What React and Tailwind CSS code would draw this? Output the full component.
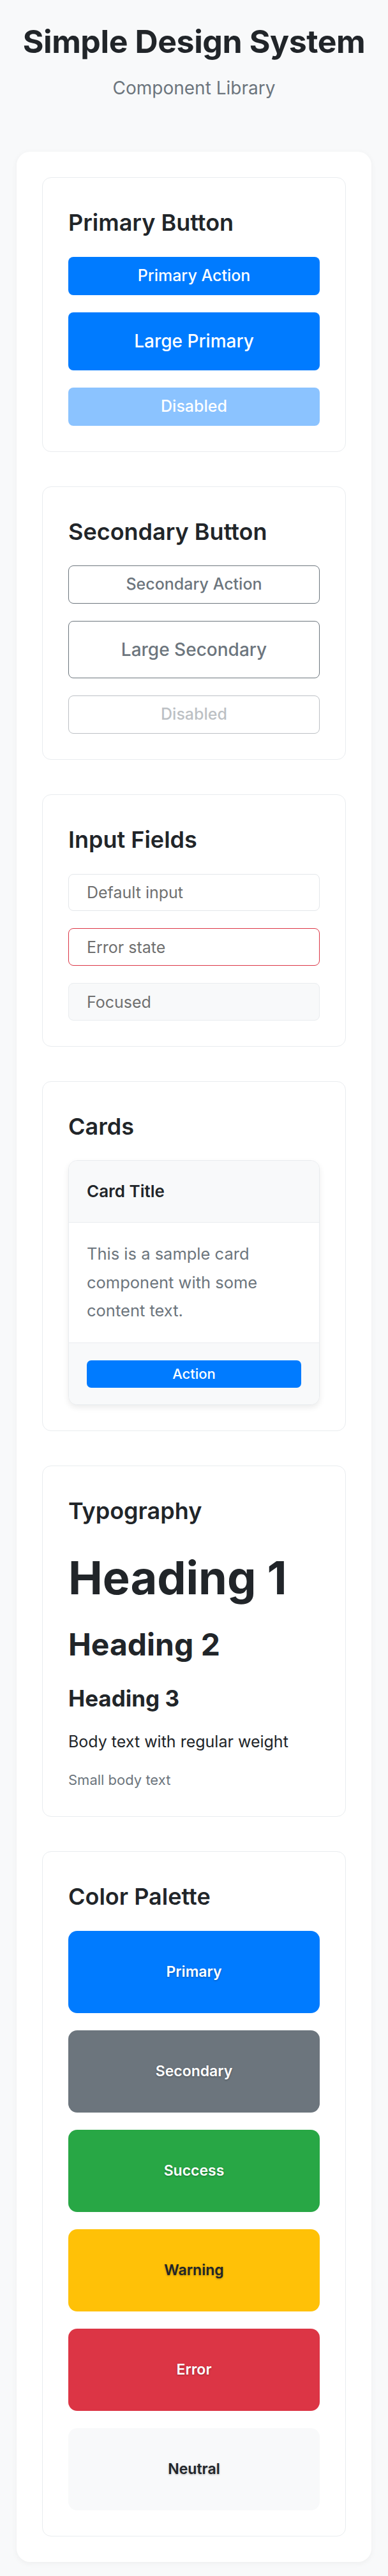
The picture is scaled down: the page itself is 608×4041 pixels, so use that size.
import React from "react";

const swatches = [
  { name: "Primary", cls: "bg-[#007bff] text-white" },
  { name: "Secondary", cls: "bg-[#6c757d] text-white" },
  { name: "Success", cls: "bg-[#28a745] text-white" },
  { name: "Warning", cls: "bg-[#ffc107] text-[#212529]" },
  { name: "Error", cls: "bg-[#dc3545] text-white" },
  { name: "Neutral", cls: "bg-[#f8f9fa] text-[#212529]" },
];

function Section({ title, children }) {
  return (
    <section className="rounded-[14px] border border-[#e9ecef] bg-white p-[40px]">
      <h2 className="mb-[23.5px] text-[36px] font-semibold leading-[60px] text-[#212529]">
        {title}
      </h2>
      {children}
    </section>
  );
}

export default function App() {
  return (
    <div className="min-h-screen bg-[#f8f9fa] px-[26px] pt-[36px] pb-[26px] font-[Inter,sans-serif] text-[#212529]">
      <header className="text-center">
        <h1 className="whitespace-nowrap text-[50px] font-bold leading-[58px] tracking-[-0.4px]">
          Simple Design System
        </h1>
        <p className="mt-[23px] text-[28px] leading-[42px] text-[#6c757d]">
          Component Library
        </p>
      </header>

      <main className="mt-[79px] flex flex-col gap-[54px] rounded-[21px] bg-white p-[40px] shadow-[0_2px_10px_rgba(0,0,0,0.05)]">
        <Section title="Primary Button">
          <div className="flex flex-col gap-[27px]">
            <button className="h-[60px] w-full rounded-[8px] bg-[#007bff] text-[25px] font-medium text-white">
              Primary Action
            </button>
            <button className="h-[91px] w-full rounded-[8px] bg-[#007bff] text-[28px] font-medium text-white">
              Large Primary
            </button>
            <button
              disabled
              className="h-[60px] w-full rounded-[8px] bg-[#007bff] text-[25px] font-medium text-white opacity-45"
            >
              Disabled
            </button>
          </div>
        </Section>

        <Section title="Secondary Button">
          <div className="flex flex-col gap-[27px]">
            <button className="h-[60px] w-full rounded-[8px] border-[1.5px] border-[#6c757d] bg-white text-[25px] font-medium text-[#6c757d]">
              Secondary Action
            </button>
            <button className="h-[90px] w-full rounded-[8px] border-[1.5px] border-[#6c757d] bg-white text-[28px] font-medium text-[#6c757d]">
              Large Secondary
            </button>
            <button
              disabled
              className="h-[60px] w-full rounded-[8px] border-[1.5px] border-[#6c757d] bg-white text-[25px] font-medium text-[#6c757d] opacity-45"
            >
              Disabled
            </button>
          </div>
        </Section>

        <Section title="Input Fields">
          <div className="flex flex-col gap-[27.4px]">
            <input
              readOnly
              placeholder="Default input"
              className="h-[58.5px] w-full rounded-[8px] border-[1.5px] border-[#e3e6ea] bg-white px-[28px] text-[25px] outline-none placeholder:text-[#6f6f6f]"
            />
            <input
              readOnly
              placeholder="Error state"
              className="h-[58.5px] w-full rounded-[8px] border-[1.5px] border-[#dc3545] bg-white px-[28px] text-[25px] outline-none placeholder:text-[#6f6f6f]"
            />
            <input
              readOnly
              placeholder="Focused"
              className="h-[58.5px] w-full rounded-[8px] border-[1.5px] border-[#e9ecef] bg-[#f8f9fa] px-[28px] text-[25px] outline-none placeholder:text-[#6f6f6f]"
            />
          </div>
        </Section>

        <Section title="Cards">
          <div className="overflow-hidden rounded-[14px] border border-[#e9ecef] bg-white shadow-[0_4px_10px_rgba(0,0,0,0.08)]">
            <div className="border-b border-[#e9ecef] bg-[#f8f9fa] px-[28px] py-[27px]">
              <h3 className="text-[26px] font-semibold leading-[42px]">Card Title</h3>
            </div>
            <div className="px-[28px] py-[27px]">
              <p className="text-[25.5px] leading-[44.5px] text-[#6c757d]">
                This is a sample card component with some content text.
              </p>
            </div>
            <div className="border-t border-[#e9ecef] bg-[#f8f9fa] px-[28px] pt-[27px] pb-[26px]">
              <button className="h-[43px] w-full rounded-[7px] bg-[#007bff] text-[22px] font-medium text-white">
                Action
              </button>
            </div>
          </div>
        </Section>

        <Section title="Typography">
          <div className="flex flex-col">
            <h1 className="mt-[9px] text-[72px] font-bold leading-[86px]">Heading 1</h1>
            <h2 className="mt-[33px] text-[48px] font-bold leading-[58px]">Heading 2</h2>
            <h3 className="mt-[33.5px] text-[35px] font-bold leading-[42px]">Heading 3</h3>
            <p className="mt-[29px] text-[25px] leading-[37.5px]">
              Body text with regular weight
            </p>
            <p className="mt-[25px] text-[22px] leading-[33px] text-[#6c757d]">
              Small body text
            </p>
          </div>
        </Section>

        <Section title="Color Palette">
          <div className="flex flex-col gap-[26.5px]">
            {swatches.map((s) => (
              <div
                key={s.name}
                className={`flex h-[129.5px] items-center justify-center rounded-[14px] text-[23px] font-semibold [text-shadow:0_1px_3px_rgba(0,0,0,0.3)] ${s.cls}`}
              >
                {s.name}
              </div>
            ))}
          </div>
        </Section>
      </main>
    </div>
  );
}
